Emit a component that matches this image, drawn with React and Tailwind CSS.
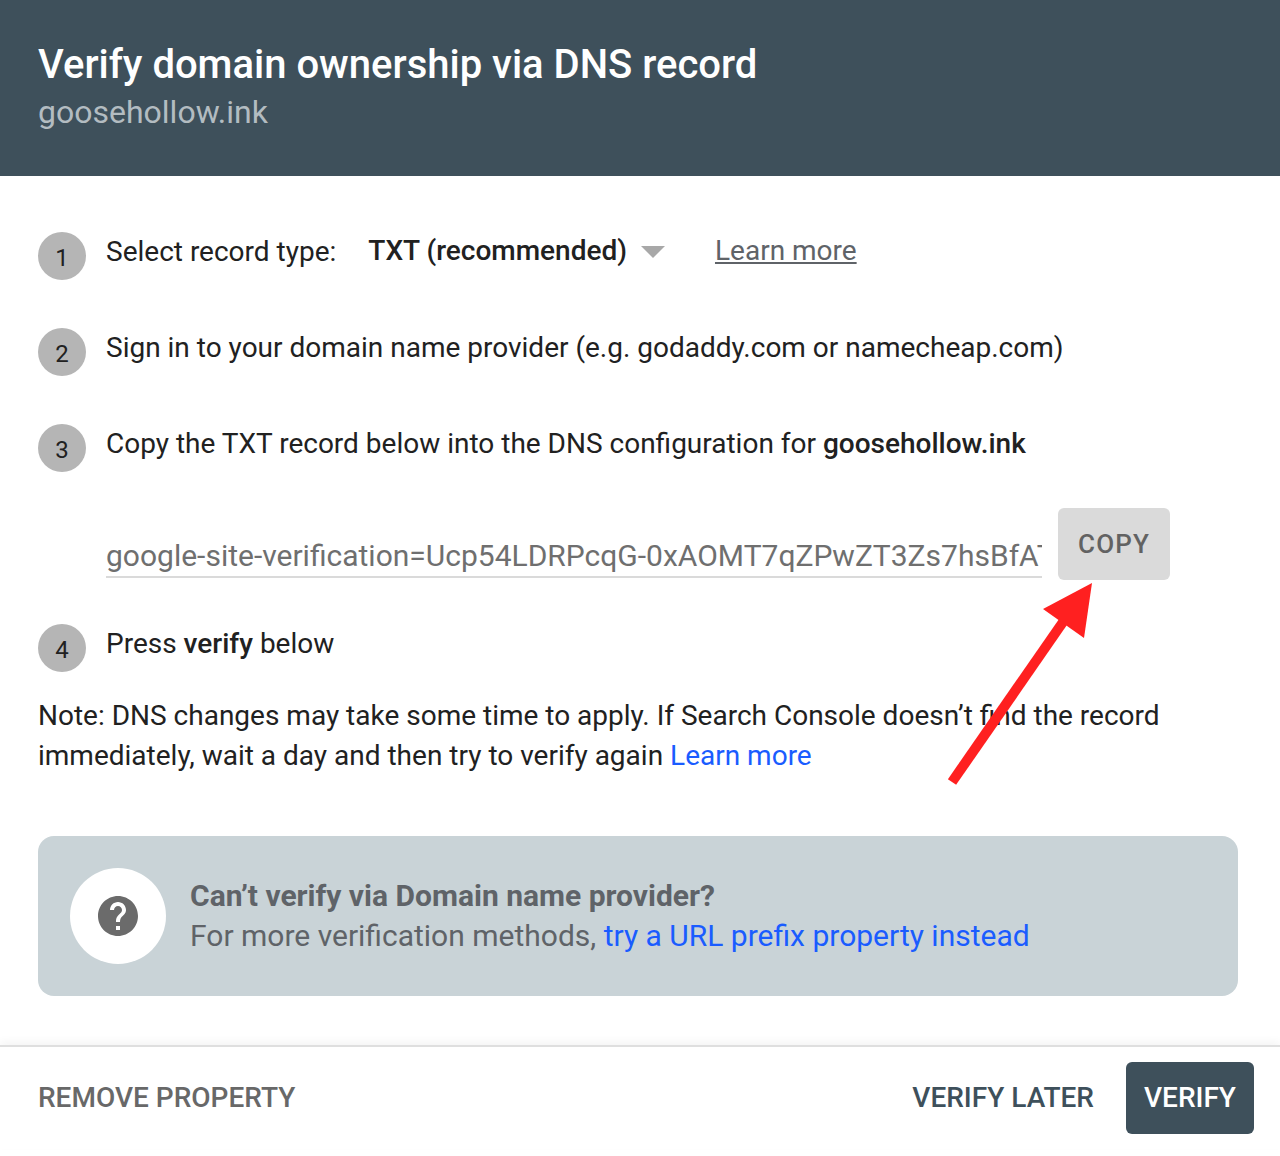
const domain = 'goosehollow.ink'

function Step({ n, children }) {
  return (
    <div className="flex items-start">
      <div className="flex h-12 w-12 shrink-0 items-center justify-center rounded-full bg-[#b5b5b5] pt-[3px] text-[24px] text-[#212121]">{n}</div>
      <div className="ml-5 text-[28px] leading-[40px] text-[#212121]">{children}</div>
    </div>
  )
}

export default function App() {
  return (
    <div className="relative h-[1156px] w-[1280px] overflow-hidden bg-white font-['Roboto',sans-serif]">
      <header className="h-[176px] bg-[#3e505b] px-[38px] pt-[39px]">
        <h1 className="text-[40px] font-medium leading-[52px] text-white">Verify domain ownership via DNS record</h1>
        <div className="text-[32px] leading-[42px] text-[#b3bcc1]">{domain}</div>
      </header>

      <main className="h-[869px] px-[38px] pt-[56px]">
        <Step n="1">
          <div className="flex items-center">
            <span>Select record type:</span>
            <span className="ml-8 -mt-[2px] font-medium">TXT (recommended)</span>
            <span className="ml-[14px] -mt-px h-0 w-0 border-x-[12px] border-t-[12px] border-x-transparent border-t-[#a8a8a8]" />
            <a className="ml-[50px] -mt-[2px] text-[#5f6368] underline">Learn more</a>
          </div>
        </Step>
        <div className="mt-12">
          <Step n="2">Sign in to your domain name provider (e.g. godaddy.com or namecheap.com)</Step>
        </div>
        <div className="mt-12">
          <Step n="3">
            Copy the TXT record below into the DNS configuration for <span className="font-medium">{domain}</span>
          </Step>
        </div>

        <div className="mt-9 ml-[68px] flex items-start">
          <div className="mt-[26px] h-[44px] w-[936px] overflow-hidden whitespace-nowrap border-b-2 border-[#dadada] text-[30px] leading-[44px] text-[#6f6f6f]">
            google-site-verification=Ucp54LDRPcqG-0xAOMT7qZPwZT3Zs7hsBfATxyz
          </div>
          <button className="ml-4 flex h-[72px] w-[112px] items-center justify-center rounded-md bg-[#dadada] text-[26px] font-medium tracking-[1.1px] text-[#626262]">COPY</button>
        </div>

        <div className="mt-11">
          <Step n="4">
            Press <span className="font-medium">verify</span> below
          </Step>
        </div>

        <p className="mt-6 text-[28px] leading-[40px] text-[#212121]">
          Note: DNS changes may take some time to apply. If Search Console doesn’t find the record<br />
          immediately, wait a day and then try to verify again <a className="text-[#1a5cff]">Learn more</a>
        </p>

        <div className="mt-[60px] flex h-[160px] w-[1200px] items-center rounded-2xl bg-[#c9d3d7] pl-8">
          <div className="flex h-24 w-24 items-center justify-center rounded-full bg-white">
            <svg width="40" height="40" viewBox="2 2 20 20" fill="#6b6b6b">
              <path d="M12 2C6.48 2 2 6.48 2 12s4.48 10 10 10 10-4.48 10-10S17.52 2 12 2zm1 17h-2v-2h2v2zm2.07-7.75l-.9.92C13.45 12.9 13 13.5 13 15h-2v-.5c0-1.1.45-2.1 1.17-2.83l1.24-1.26c.37-.36.59-.86.59-1.41 0-1.1-.9-2-2-2s-2 .9-2 2H8c0-2.21 1.79-4 4-4s4 1.79 4 4c0 .88-.36 1.68-.93 2.25z" />
            </svg>
          </div>
          <div className="ml-6 text-[30px] leading-[40px] text-[#5f6368]">
            <div className="font-bold">Can’t verify via Domain name provider?</div>
            <div>
              For more verification methods, <a className="text-[#1a5cff]">try a URL prefix property instead</a>
            </div>
          </div>
        </div>
      </main>

      <footer className="flex h-[104px] items-center border-t-2 border-[#dfdfdf] pl-[38px] pr-[26px] shadow-[0_-4px_8px_rgba(0,0,0,0.04)]">
        <button className="text-[28px] font-medium text-[#686868]">REMOVE PROPERTY</button>
        <button className="ml-auto text-[28px] font-medium text-[#3e505b]">VERIFY LATER</button>
        <button className="ml-8 flex h-[72px] w-[128px] items-center justify-center rounded-md bg-[#3e505b] text-[28px] font-medium text-white">VERIFY</button>
      </footer>

      <svg className="absolute left-0 top-0" width="1280" height="1156" fill="none">
        <path d="M952 782 L1063 622" stroke="#ff2020" strokeWidth="10" />
        <path d="M1092 583 L1043 609 L1084 638 Z" fill="#ff2020" />
      </svg>
    </div>
  )
}
